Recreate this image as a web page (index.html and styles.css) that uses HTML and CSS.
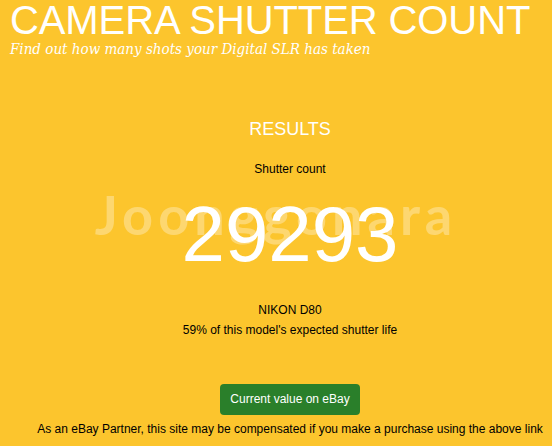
FILE: index.html
```html
<!DOCTYPE html>
<html lang="en">
<head>
    <meta charset="UTF-8">
    <meta name="viewport" content="width=device-width, initial-scale=1.0">
    <title>Camera Shutter Count</title>
    <link rel="stylesheet" href="styles.css">
</head>
<body>
    <div class="site-header">
        <h1 class="site-title">CAMERA SHUTTER COUNT</h1>
        <div class="site-tagline">Find out how many shots your Digital SLR has taken</div>
    </div>

    <div class="results">
        <h2 class="results-title">RESULTS</h2>
        <div class="results-label">Shutter count</div>
        <div class="count-wrap">
            <div class="watermark">Joonggonara</div>
            <div class="count">29293</div>
        </div>
        <div class="model">NIKON D80</div>
        <div class="life">59% of this model's expected shutter life</div>
        <a class="ebay-button" href="#">Current value on eBay</a>
        <div class="disclaimer">As an eBay Partner, this site may be compensated if you make a purchase using the above link</div>
    </div>
</body>
</html>
```

FILE: styles.css
```css
body {
    margin: 0;
    padding: 0;
    background-color: #fcc52d;
    font-family: "Liberation Sans", Arial, sans-serif;
    color: #000;
    overflow: hidden;
}

.site-header {
    padding: 0 0 0 10px;
}

.site-title {
    margin: 0;
    font-size: 40px;
    font-weight: normal;
    line-height: 40px;
    color: #fff;
    letter-spacing: -0.1px;
    white-space: nowrap;
}

.site-tagline {
    font-family: "DejaVu Serif Condensed", "DejaVu Serif", serif;
    font-style: italic;
    font-size: 15px;
    line-height: 18px;
    color: #fff;
    white-space: nowrap;
}

.results {
    padding-left: 28px;
    text-align: center;
}

.results-title {
    margin: 0;
    padding-top: 61px;
    font-size: 18px;
    font-weight: normal;
    line-height: 20px;
    color: #fff;
}

.results-label {
    margin-top: 23px;
    font-size: 12px;
    line-height: 14px;
}

.count-wrap {
    position: relative;
    height: 127px;
}

.watermark {
    position: absolute;
    left: 0;
    right: 28px;
    top: 9px;
    font-family: Lato, "Noto Sans", sans-serif;
    font-weight: bold;
    font-size: 54px;
    line-height: 60px;
    letter-spacing: 5px;
    color: rgba(255, 255, 255, 0.32);
    text-align: center;
}

.count {
    position: relative;
    font-size: 78px;
    line-height: 100px;
    padding-top: 8px;
    color: #fff;
}

.model {
    font-size: 12px;
    line-height: 14px;
}

.life {
    margin-top: 6px;
    font-size: 12px;
    line-height: 14px;
}

.ebay-button {
    display: inline-block;
    margin-top: 47px;
    padding: 8px 10px;
    background: #2a7f2a;
    color: #fff;
    font-size: 12px;
    line-height: 15px;
    text-decoration: none;
    border-radius: 4px;
}

.disclaimer {
    margin-top: 7px;
    font-size: 12px;
    line-height: 14px;
}
```
